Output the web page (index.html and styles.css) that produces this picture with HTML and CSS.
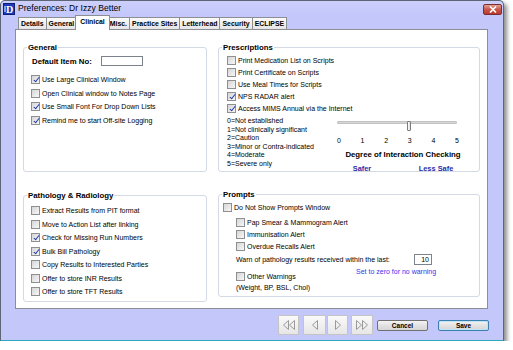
FILE: index.html
```html
<!DOCTYPE html>
<html lang="en">
<head>
    <meta charset="UTF-8">
    <title>Preferences: Dr Izzy Better</title>
    <link rel="stylesheet" href="styles.css">
</head>
<body>
    <div class="window">
        <div class="title-bar">
            <svg class="app-icon" width="12" height="12" viewBox="0 0 12 12">
                <rect x="0" y="0" width="12" height="12" fill="#1d3bb8"/>
                <rect x="0.5" y="0.5" width="11" height="11" fill="none" stroke="#0b1f78"/>
                <text x="6.5" y="10" font-family="Liberation Serif, serif" font-weight="bold" font-size="10" fill="#fff" text-anchor="middle">D</text>
                <path d="M2 3 L2 9" stroke="#fff" stroke-width="1"/>
            </svg>
            <span class="title">Preferences: Dr Izzy Better</span>
            <button class="close-btn">
                <svg width="8" height="7" viewBox="0 0 8 7">
                    <path d="M1 0.5 L7 6.5 M7 0.5 L1 6.5" stroke="#fff" stroke-width="1.6"/>
                </svg>
            </button>
        </div>

        <div class="tabs">
            <span class="tab">Details</span>
            <span class="tab">General</span>
            <span class="tab active">Clinical</span>
            <span class="tab">Misc.</span>
            <span class="tab">Practice Sites</span>
            <span class="tab">Letterhead</span>
            <span class="tab">Security</span>
            <span class="tab">ECLIPSE</span>
        </div>

        <div class="tab-panel">
            <!-- General -->
            <div class="group group-general">
                <div class="group-title">General</div>
                <div class="default-row">
                    <span class="field-label">Default Item No:</span>
                    <span class="textbox item-box"></span>
                </div>
                <div class="check-list tall first-gap">
                    <div class="check-row"><span class="cb on"></span>Use Large Clinical Window</div>
                    <div class="check-row"><span class="cb"></span>Open Clinical window to Notes Page</div>
                    <div class="check-row"><span class="cb on"></span>Use Small Font For Drop Down Lists</div>
                    <div class="check-row"><span class="cb on"></span>Remind me to start Off-site Logging</div>
                </div>
            </div>

            <!-- Prescriptions -->
            <div class="group group-scripts">
                <div class="group-title">Prescriptions</div>
                <div class="check-list short">
                    <div class="check-row"><span class="cb"></span>Print Medication List on Scripts</div>
                    <div class="check-row"><span class="cb"></span>Print Certificate on Scripts</div>
                    <div class="check-row"><span class="cb"></span>Use Meal Times for Scripts</div>
                    <div class="check-row"><span class="cb on"></span>NPS RADAR alert</div>
                    <div class="check-row"><span class="cb on"></span>Access MIMS Annual via the Internet</div>
                </div>
                <div class="scale">
                    <div class="scale-legend">
                        <div>0=Not established</div>
                        <div>1=Not clinically significant</div>
                        <div>2=Caution</div>
                        <div>3=Minor or Contra-indicated</div>
                        <div>4=Moderate</div>
                        <div>5=Severe only</div>
                    </div>
                    <div class="slider">
                        <div class="track">
                            <span class="thumb" style="left: 60%"></span>
                        </div>
                        <div class="ticks">
                            <span>0</span><span>1</span><span>2</span><span>3</span><span>4</span><span>5</span>
                        </div>
                        <div class="slider-caption">Degree of Interaction Checking</div>
                        <div class="slider-ends">
                            <span class="safer">Safer</span>
                            <span class="less-safe">Less Safe</span>
                        </div>
                    </div>
                </div>
            </div>

            <!-- Pathology & Radiology -->
            <div class="group group-path">
                <div class="group-title">Pathology &amp; Radiology</div>
                <div class="check-list tall path-gap">
                    <div class="check-row"><span class="cb"></span>Extract Results from PIT format</div>
                    <div class="check-row"><span class="cb"></span>Move to Action List after linking</div>
                    <div class="check-row"><span class="cb on"></span>Check for Missing Run Numbers</div>
                    <div class="check-row"><span class="cb on"></span>Bulk Bill Pathology</div>
                    <div class="check-row"><span class="cb"></span>Copy Results to Interested Parties</div>
                    <div class="check-row"><span class="cb"></span>Offer to store INR Results</div>
                    <div class="check-row"><span class="cb"></span>Offer to store TFT Results</div>
                </div>
            </div>

            <!-- Prompts -->
            <div class="group group-prompts">
                <div class="group-title">Prompts</div>
                <div class="check-row prompt-main"><span class="cb"></span>Do Not Show Prompts Window</div>
                <div class="prompt-sub">
                    <div class="check-row"><span class="cb"></span>Pap Smear &amp; Mammogram Alert</div>
                    <div class="check-row"><span class="cb"></span>Immunisation Alert</div>
                    <div class="check-row"><span class="cb"></span>Overdue Recalls Alert</div>
                    <div class="warn-row">
                        <span class="warn-text">Warn of pathology results received within the last:</span>
                        <span class="textbox days-box">10</span>
                    </div>
                    <div class="other-row">
                        <div class="other-col">
                            <div class="check-row"><span class="cb"></span>Other Warnings</div>
                            <div class="other-note">(Weight, BP, BSL, Chol)</div>
                        </div>
                        <div class="hint">Set to zero for no warning</div>
                    </div>
                </div>
            </div>
        </div>

        <div class="button-bar">
            <button class="nav-btn nav-first">
                <svg width="12" height="10" viewBox="0 0 12 10"><path d="M5.5 0.5 L0.5 5 L5.5 9.5 Z M11.5 0.5 L6.5 5 L11.5 9.5 Z" fill="none" stroke="#9a9a9a"/></svg>
            </button>
            <button class="nav-btn nav-prev">
                <svg width="6" height="10" viewBox="0 0 6 10"><path d="M5.5 0.5 L0.5 5 L5.5 9.5 Z" fill="none" stroke="#9a9a9a"/></svg>
            </button>
            <button class="nav-btn nav-next">
                <svg width="6" height="10" viewBox="0 0 6 10"><path d="M0.5 0.5 L5.5 5 L0.5 9.5 Z" fill="none" stroke="#9a9a9a"/></svg>
            </button>
            <button class="nav-btn nav-last">
                <svg width="12" height="10" viewBox="0 0 12 10"><path d="M0.5 0.5 L5.5 5 L0.5 9.5 Z M6.5 0.5 L11.5 5 L6.5 9.5 Z" fill="none" stroke="#9a9a9a"/></svg>
            </button>
            <button class="btn cancel-btn">Cancel</button>
            <button class="btn save-btn">Save</button>
        </div>
    </div>
</body>
</html>
```

FILE: styles.css
```css
body {
    margin: 0;
    background: #fff;
    font-family: "Liberation Sans", Arial, sans-serif;
    font-size: 7px;
    color: #000;
}
.window {
    width: 504px;
    height: 341px;
    box-sizing: border-box;
    background: #c3c7fa;
    border: 1px solid #5c6676;
    border-bottom: 1px solid #2aa9c0;
    border-radius: 5px 5px 0 0;
    box-shadow: 3px 3px 4px rgba(0, 0, 0, 0.45);
    display: flex;
    flex-direction: column;
}
.title-bar {
    height: 14px;
    display: flex;
    align-items: flex-start;
    padding-left: 2px;
    background: linear-gradient(#cdd0fb, #c3c7fa);
    border-radius: 5px 5px 0 0;
}
.app-icon {
    margin-top: 2px;
    flex: none;
}
.title {
    margin: 2px 0 0 3px;
    font-size: 8.6px;
    line-height: 11px;
}
.close-btn {
    margin: 3px 1px 0 auto;
    width: 19px;
    height: 11px;
    padding: 0;
    border: 1px solid #7a3030;
    border-radius: 2px;
    background: linear-gradient(#e6a095, #c9564a 50%, #b9392d);
    display: flex;
    align-items: center;
    justify-content: center;
}

/* tabs */
.tabs {
    height: 14px;
    margin-left: 14px;
    display: flex;
    align-items: flex-end;
    position: relative;
    z-index: 1;
}
.tab {
    height: 12px;
    box-sizing: border-box;
    padding: 0 2px;
    margin-left: -1px;
    border: 1px solid #8c8e94;
    border-bottom: none;
    background: linear-gradient(#fbfbfb, #e5e5e5);
    font-weight: bold;
    font-size: 6.9px;
    line-height: 11px;
    white-space: nowrap;
}
.tab:first-child {
    margin-left: 3px;
}
.tab.active {
    height: 15px;
    margin: 0 -2px -1px -2px;
    padding: 0 4px;
    background: #fff;
    line-height: 12px;
    position: relative;
}
.tab-panel {
    margin-left: 14px;
    width: 473px;
    height: 280px;
    box-sizing: border-box;
    background: #fff;
    border: 1px solid #8c8e94;
    padding: 17px 0 0 7px;
    display: grid;
    grid-template-columns: 184px 262px;
    grid-template-rows: 125px auto;
    column-gap: 11px;
    row-gap: 22px;
    align-items: start;
}

/* group boxes */
.group {
    border: 1px solid #d3dae4;
    border-radius: 3px;
    box-sizing: border-box;
}
.group-title {
    width: fit-content;
    margin: -5px 0 0 3px;
    padding: 0 1px;
    background: #fff;
    font-weight: bold;
    font-size: 7.8px;
    line-height: 9px;
}
.group-general, .group-scripts {
    height: 125px;
}
.group-path {
    height: 107px;
    margin-top: 1px;
}
.group-prompts {
    height: 103px;
}
.default-row {
    margin: 3px 0 0 8px;
    height: 12px;
    display: flex;
    align-items: center;
}
.field-label {
    width: 69px;
    font-weight: bold;
    font-size: 7.8px;
}
.textbox {
    display: block;
    box-sizing: border-box;
    border: 1px solid #7d838c;
    background: #fff;
}
.item-box {
    width: 42px;
    height: 10px;
}
.check-list.tall {
    margin-left: 7px;
}
.check-list.tall .check-row {
    height: 13.5px;
}
.first-gap {
    margin-top: 6px;
}
.path-gap {
    margin-top: 4px;
}
.check-list.short {
    margin: 2px 0 0 8px;
}
.check-row {
    height: 12px;
    display: flex;
    align-items: center;
    gap: 2px;
    white-space: nowrap;
}
.cb {
    width: 9px;
    height: 9px;
    box-sizing: border-box;
    border: 1px solid #8f8f8f;
    background: linear-gradient(135deg, #d6d6d6, #f7f7f7);
    position: relative;
    flex: none;
}
.cb.on::after {
    content: '';
    position: absolute;
    left: 2.5px;
    top: 0;
    width: 2px;
    height: 5px;
    border: solid #2238a8;
    border-width: 0 1.2px 1.2px 0;
    transform: rotate(38deg);
}

/* interaction scale */
.scale {
    display: flex;
    margin: 3px 0 0 8px;
}
.scale-legend {
    width: 110px;
    line-height: 8.6px;
    white-space: nowrap;
}
.slider {
    width: 132px;
}
.track {
    width: 120px;
    height: 10px;
    position: relative;
}
.track::before {
    content: '';
    display: block;
    margin-top: 4px;
    height: 1px;
    background: #d6d6d6;
    border: 1px solid #c2c2c2;
    border-radius: 1px;
}
.thumb {
    position: absolute;
    top: 0;
    width: 4px;
    height: 10px;
    margin-left: -2px;
    box-sizing: border-box;
    border: 1px solid #7c7c7c;
    border-radius: 1px;
    background: linear-gradient(90deg, #fff, #dcdcdc);
}
.ticks {
    width: 122px;
    margin-top: 5px;
    line-height: 9px;
    display: flex;
    justify-content: space-between;
}
.slider-caption {
    margin-top: 5px;
    line-height: 9px;
    font-weight: bold;
    font-size: 7.8px;
    text-align: center;
    white-space: nowrap;
}
.slider-ends {
    margin-top: 5px;
    line-height: 9px;
    display: flex;
    font-weight: bold;
    font-size: 7.4px;
    color: #2a2ca8;
}
.safer, .less-safe {
    width: 50px;
    text-align: center;
}
.less-safe {
    margin-left: 24px;
}

/* prompts */
.prompt-main {
    margin: 2px 0 0 4px;
}
.prompt-sub {
    margin: 3px 0 0 17px;
}
.warn-row {
    margin-top: 1px;
    height: 12px;
    display: flex;
    align-items: center;
}
.warn-text {
    width: 178px;
    white-space: nowrap;
}
.days-box {
    width: 18px;
    height: 11px;
    line-height: 9px;
    text-align: right;
    padding-right: 2px;
}
.other-row {
    margin-top: 1px;
    display: flex;
}
.other-col {
    width: 120px;
    padding-top: 4px;
}
.other-note {
    line-height: 12px;
}
.hint {
    line-height: 12px;
    color: #3535ee;
    white-space: nowrap;
}

/* bottom buttons */
.button-bar {
    margin-top: 6px;
    padding-right: 14px;
    display: flex;
    justify-content: flex-end;
    align-items: center;
}
.nav-btn {
    height: 20px;
    padding: 0;
    border: 1px solid #c4c4c4;
    border-radius: 1px;
    background: linear-gradient(#fafafa, #e6e6e6);
    display: flex;
    align-items: center;
    justify-content: center;
}
.nav-first {
    width: 21px;
}
.nav-prev {
    width: 23px;
    margin-left: 4px;
}
.nav-next {
    width: 21px;
    margin-left: 1px;
}
.nav-last {
    width: 22px;
    margin-left: 3px;
}
.btn {
    width: 51px;
    height: 11px;
    padding: 0;
    border: 1px solid #707070;
    border-radius: 2px;
    background: linear-gradient(#f4f4f4, #e2e2e2 50%, #d6d6d6);
    font-family: "Liberation Sans", Arial, sans-serif;
    font-weight: bold;
    font-size: 6.5px;
    line-height: 9px;
    color: #000;
}
.cancel-btn {
    margin-left: 4px;
}
.save-btn {
    margin-left: 10px;
    border-color: #3c7fb1;
    box-shadow: inset 0 0 0 1px #bfe3f6;
}
```
